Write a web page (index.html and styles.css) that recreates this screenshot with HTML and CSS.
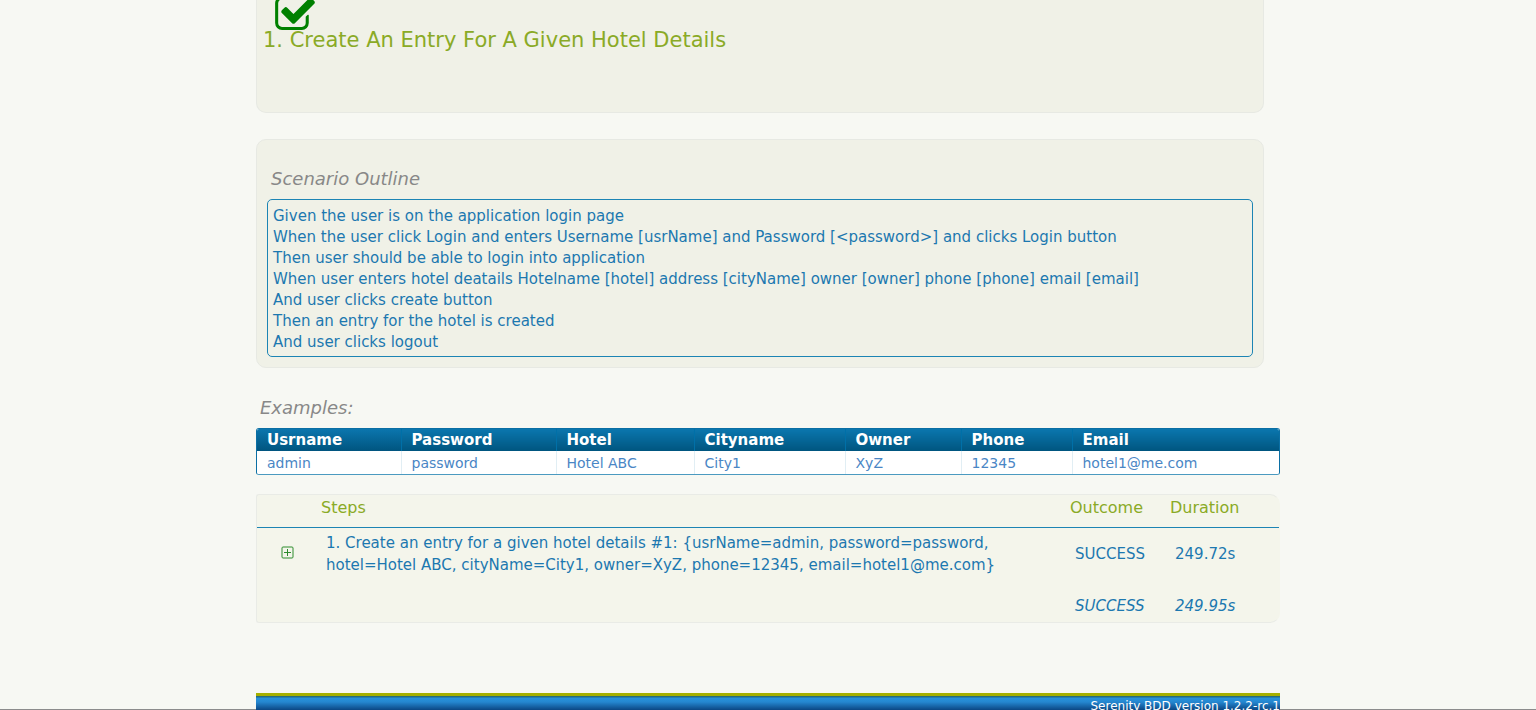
FILE: index.html
```html
<!DOCTYPE html>
<html lang="en">
<head>
<meta charset="utf-8">
<title>Create An Entry For A Given Hotel Details</title>
<link rel="stylesheet" href="styles.css">
</head>
<body>
<div class="screen">
  <main class="content">
    <section class="panel story">
      <svg class="story-icon" viewBox="64 280 1664 1256" aria-hidden="true"><path d="M1472 930v318q0 119-84.500 203.500t-203.500 84.500h-832q-119 0-203.500-84.500t-84.500-203.500v-832q0-119 84.500-203.500t203.500-84.500h832q63 0 117 25 15 7 18 23 3 17-9 29l-49 49q-10 10-23 10-3 0-9-2-23-6-45-6h-832q-66 0-113 47t-47 113v832q0 66 47 113t113 47h832q66 0 113-47t47-113v-254q0-13 9-22l64-64q10-10 23-10 6 0 12 3 20 8 20 29zm231-489l-814 814q-24 24-57 24t-57-24l-430-430q-24-24-24-57t24-57l110-110q24-24 57-24t57 24l263 263 647-647q24-24 57-24t57 24l110 110q24 24 24 57t-24 57z"/></svg>
      <h1 class="story-title">1. Create An Entry For A Given Hotel Details</h1>
    </section>

    <section class="panel outline">
      <h2 class="heading">Scenario Outline</h2>
      <div class="outline-box">
        Given the user is on the application login page<br>
        When the user click Login and enters Username [usrName] and Password [&lt;password&gt;] and clicks Login button<br>
        Then user should be able to login into application<br>
        When user enters hotel deatails Hotelname [hotel] address [cityName] owner [owner] phone [phone] email [email]<br>
        And user clicks create button<br>
        Then an entry for the hotel is created<br>
        And user clicks logout
      </div>
    </section>

    <h2 class="heading examples-heading">Examples:</h2>
    <div class="examples-frame">
      <table class="examples">
        <colgroup><col class="c-user"><col class="c-pass"><col class="c-hotel"><col class="c-city"><col class="c-owner"><col class="c-phone"><col></colgroup>
        <thead><tr><th>Usrname</th><th>Password</th><th>Hotel</th><th>Cityname</th><th>Owner</th><th>Phone</th><th>Email</th></tr></thead>
        <tbody><tr><td>admin</td><td>password</td><td>Hotel ABC</td><td>City1</td><td>XyZ</td><td>12345</td><td>hotel1@me.com</td></tr></tbody>
      </table>
    </div>

    <table class="steps">
      <colgroup><col class="c-toggle"><col><col class="c-outcome"><col class="c-duration"></colgroup>
      <thead><tr><th></th><th>Steps</th><th>Outcome</th><th>Duration</th></tr></thead>
      <tbody>
        <tr class="step">
          <td><button class="toggle" type="button" aria-label="Expand step"><svg viewBox="0 0 13 13" aria-hidden="true"><rect x="1" y="1" width="11" height="11" rx="1"/><path d="M3 6.500h7M6.500 3v7"/></svg></button></td>
          <td>1. Create an entry for a given hotel details #1: {usrName=admin, password=password, hotel=Hotel ABC, cityName=City1, owner=XyZ, phone=12345, email=hotel1@me.com}</td>
          <td>SUCCESS</td><td>249.72s</td>
        </tr>
        <tr class="total"><td></td><td></td><td>SUCCESS</td><td>249.95s</td></tr>
      </tbody>
    </table>

    <footer class="footer">Serenity BDD version 1.2.2-rc.1</footer>
  </main>
</div>
</body>
</html>
```
FILE: styles.css
```css
* { box-sizing: border-box; }
body {
  margin: 0;
  background: #f7f8f3;
  color: #1c78b0;
  font: 15px/21px Verdana, "DejaVu Sans", sans-serif;
}
.screen {
  position: relative;
  height: 100vh;
  overflow: hidden;
}
.screen::after {
  content: "";
  position: absolute;
  inset: auto 0 0;
  height: 1px;
  background: #8c8c8c;
}
.content {
  position: relative;
  z-index: 1;
  max-width: 1024px;
  margin: 0 auto;
}
.panel {
  margin: 0 16px 26px 0;
  background: #f0f1e7;
  border: 1px solid #e7e9e3;
  border-radius: 10px;
}
.story {
  border-top: 0;
  border-radius: 0 0 10px 10px;
  padding: 0 6px 58px;
}
.story-icon {
  display: block;
  width: 40px;
  height: 30px;
  margin-left: 12px;
  fill: #008000;
}
.story-title {
  margin: -3px 0 0;
  color: #8aaa26;
  font-size: 21px;
  font-weight: normal;
  line-height: 27px;
}
.outline { padding: 27px 10px 10px; }
.heading {
  margin: 0 0 8px 4px;
  color: #888;
  font-size: 18px;
  font-style: italic;
  font-weight: normal;
  line-height: 24px;
}
.outline-box {
  padding: 6px 5px 3px;
  border: 1px solid #1c84b4;
  border-radius: 5px;
}
.examples-heading { margin: 28px 0 8px 4px; }
table { border-collapse: collapse; }
th, td { text-align: left; }
.examples-frame {
  overflow: hidden;
  border: 1px solid #0b6fa4;
  border-bottom-color: #4b9ac0;
  border-radius: 3px;
}
.examples {
  width: 100%;
  table-layout: fixed;
  background: #fff;
  line-height: 22px;
}
.examples th, .examples td { padding: 0 10px; }
.examples th {
  height: 22px;
  background: linear-gradient(#0b76ae, #00557f);
  color: #fff;
  font-size: 15px;
}
.examples td {
  height: 23px;
  color: #4a86c5;
  font-size: 14px;
}
.examples th + th { border-left: 1px solid #0070a8; }
.examples td + td { border-left: 1px solid #e1eef4; }
.c-user { width: 144px; }
.c-pass { width: 155px; }
.c-hotel { width: 138px; }
.c-city { width: 151px; }
.c-owner { width: 116px; }
.c-phone { width: 111px; }
.steps {
  width: 100%;
  margin-top: 19px;
  table-layout: fixed;
  border-collapse: separate;
  border-spacing: 0;
  background: #f4f5eb;
  border: 1px solid #e9ebe6;
  border-right-color: #f4f5eb;
  border-radius: 3px 10px 10px 3px;
}
.steps th {
  height: 33px;
  padding: 2px 0 0;
  border-bottom: 1px solid #1c84b4;
  color: #8aaa26;
  font-size: 16px;
  font-weight: normal;
  vertical-align: top;
}
.steps th:nth-child(2) { padding-left: 8px; }
.steps td { padding: 0 5px; }
.steps td:nth-child(2) { padding: 0 60px 0 13px; }
.step td { height: 52px; line-height: 22px; }
.total td { height: 42px; padding-top: 10px; font-style: italic; }
.c-toggle { width: 56px; }
.c-outcome { width: 100px; }
.c-duration { width: 109px; }
.toggle {
  display: block;
  width: 13px;
  height: 13px;
  margin: 0 0 3px 19px;
  padding: 0;
  border: 0;
  background: none;
  cursor: pointer;
}
.toggle svg {
  display: block;
  fill: none;
  stroke: #2d8c2d;
}
.footer {
  height: 40px;
  margin-top: 70px;
  padding-top: 1px;
  border-top: 3px solid #a5b000;
  background: linear-gradient(#246b80 1px, #2693dc 2px, #2587d0 6px, #083f7b 15px);
  color: #fff;
  font-size: 12px;
  line-height: 18px;
  text-align: right;
}
```
